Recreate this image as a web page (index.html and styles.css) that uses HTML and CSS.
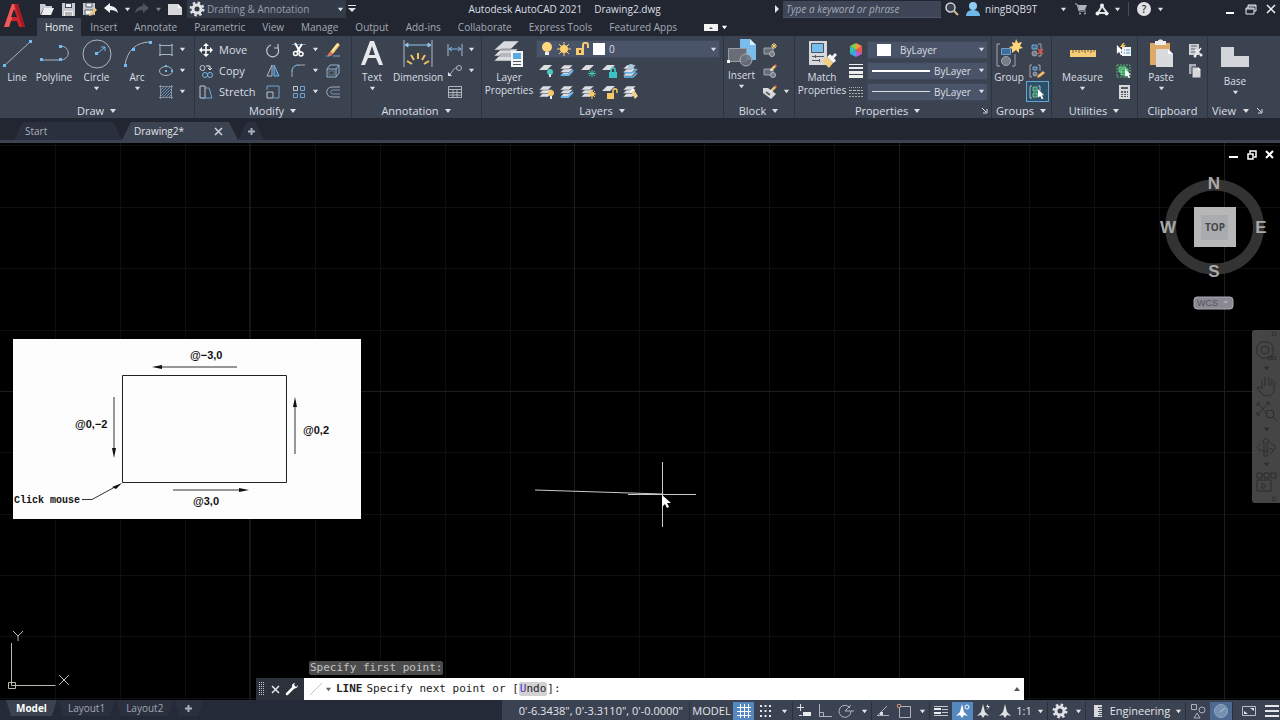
FILE: index.html
```html
<!DOCTYPE html>
<html lang="en">
<head>
<meta charset="utf-8">
<title>Autodesk AutoCAD 2021 - Drawing2.dwg</title>
<link rel="stylesheet" href="styles.css">
</head>
<body>
<svg class="sprite" aria-hidden="true">
  <symbol id="caret" viewBox="0 0 8 8"><path d="M1 2h6L4 6z" fill="currentColor"/></symbol>
  <symbol id="launch" viewBox="0 0 8 8"><path d="M1 1l4 4M6 2v4H2" stroke="currentColor" fill="none"/></symbol>
  <symbol id="layers" viewBox="0 0 16 16"><g fill="#dcdee2" stroke="#444c5a" stroke-width=".5"><path d="M0 13l4-4h9l-4 4z"/><path d="M0 9.500l4-4h9l-4 4z"/><path d="M0 6l4-4h9L9 6z"/></g></symbol>
  <symbol id="sheet" viewBox="0 0 16 16"><path d="M0 7l5-5h8L8 7z" fill="#dcdee2"/></symbol>
  <symbol id="cursor" viewBox="0 0 10 14"><path d="M1 0v11l3-2 2 4 2-1-2-4h3z" fill="#fff"/></symbol>
  <symbol id="pencil" viewBox="0 0 8 8"><path d="M0 8l1-3 3 2z" fill="#fff"/><path d="M1 5l4-4 2 2-4 4z" fill="#f3c56c"/><path d="M5 1l1-1 2 2-1 1z" fill="#e35b4f"/></symbol>
</svg>

<header class="top">
  <button class="logo" aria-label="Application menu"><svg width="26" height="28" viewBox="0 0 26 28"><path d="M3 25L11 2h6l7 23h-6l-2-6H9l-1 6z" fill="#c9262d"/><path d="M3 25L11 2h2l1 5-6 18z" fill="#ef5a56"/><path d="M10 15l3-8 3 8z" fill="#212631"/><path d="M17 2l7 23h-3L14 3z" fill="#a51b23"/></svg></button>
  <div class="top-rows">
    <div class="titlebar">
      <div class="quick">
        <button aria-label="Open"><svg width="16" height="14" viewBox="0 0 16 14"><path d="M1 13V2h5l1 2h6v2H5z" fill="#c9cbd0"/><path d="M5 6h10l-3 7H2z" fill="#eceef0"/></svg></button>
        <button aria-label="Save"><svg width="15" height="15" viewBox="0 0 15 15"><path d="M1 1h13v13H1z" fill="#c6cad0"/><path d="M4 1h7v5H4z" fill="#454b58"/><path d="M5 2h5v3H5zM3 9h9v5H3z" fill="#f2f2f2"/><path d="M4 11h7M4 13h7" stroke="#777"/></svg></button>
        <button aria-label="Save as"><svg width="16" height="15" viewBox="0 0 16 15"><path d="M1 1h12v12H1z" fill="#c6cad0"/><path d="M4 1h6v4H4zM3 8h8v5H3z" fill="#f2f2f2" stroke="#555b66"/><path d="M7 14l1-3 5-5 2 2-5 5z" fill="#f0c478"/></svg></button>
        <button aria-label="Undo"><svg width="16" height="12" viewBox="0 0 16 12"><path d="M1 5l6-5v3c4 0 7 2 8 7-2-2-4-3-8-3v3z" fill="#f0f1f3"/></svg></button>
        <button aria-label="Undo list"><svg class="caret"><use href="#caret"/></svg></button>
        <button aria-label="Redo"><svg width="16" height="12" viewBox="0 0 16 12"><path d="M15 5L9 0v3C5 3 2 5 1 10c2-2 4-3 8-3v3z" fill="#4d5360"/></svg></button>
        <button aria-label="Redo list" class="faint"><svg class="caret"><use href="#caret"/></svg></button>
        <button aria-label="New"><svg width="16" height="13" viewBox="0 0 16 13"><path d="M1 1h10l4 4v7H1z" fill="#d6d8dc"/><path d="M11 1v4h4z" fill="#fff"/></svg></button>
        <label class="workspace"><svg width="16" height="16" viewBox="0 0 16 16"><circle cx="8" cy="8" r="6" fill="none" stroke="#dfe1e5" stroke-width="3" stroke-dasharray="2.350 2.350"/><circle cx="8" cy="8" r="4" fill="none" stroke="#dfe1e5" stroke-width="3"/></svg><select aria-label="Workspace"><option>Drafting &amp; Annotation</option></select><svg class="caret"><use href="#caret"/></svg></label>
        <button aria-label="Customize"><svg width="8" height="10" viewBox="0 0 8 10"><path d="M0 1h8v1H0zM0 4h8L4 8z" fill="#dfe1e5"/></svg></button>
      </div>
      <div class="title"><span>Autodesk AutoCAD 2021</span><span>Drawing2.dwg</span></div>
      <div class="infobar">
        <button aria-label="Collapse search"><svg width="6" height="8" viewBox="0 0 6 8"><path d="M1 0l4 4-4 4z" fill="#e4e6ea"/></svg></button>
        <input type="text" class="search" aria-label="Search help" placeholder="Type a keyword or phrase">
        <button aria-label="Search"><svg width="14" height="14" viewBox="0 0 14 14"><circle cx="5.500" cy="5.500" r="4.500" fill="#3a4150" stroke="#cfd2d7" stroke-width="1.500"/><path d="M9 9l4 4" stroke="#d9b98c" stroke-width="2"/></svg></button>
        <svg width="16" height="14" viewBox="0 0 16 14"><circle cx="8" cy="4" r="4" fill="#8ecbf5"/><path d="M1 14c0-4 3-6 7-6s7 2 7 6z" fill="#6fb7ea"/></svg>
        <button class="user">ningBQB9T</button>
        <button aria-label="Account menu"><svg class="caret"><use href="#caret"/></svg></button>
        <button aria-label="App store"><svg width="13" height="12" viewBox="0 0 13 12"><path d="M0 1h2l2 7h7" fill="none" stroke="#aeb2ba"/><path d="M3 2h9l-2 5H4z" fill="#aeb2ba"/><circle cx="5" cy="10.500" r="1" fill="#aeb2ba"/><circle cx="10" cy="10.500" r="1" fill="#aeb2ba"/></svg></button>
        <button aria-label="Autodesk App"><svg width="14" height="13" viewBox="0 0 14 13"><path d="M7 3L3 10h9z" fill="none" stroke="#dfe1e5" stroke-width="2"/><g fill="#eceef0"><circle cx="7" cy="2.500" r="2"/><circle cx="2.500" cy="10.500" r="2"/><circle cx="11.500" cy="10.500" r="2"/></g></svg></button>
        <button aria-label="App menu"><svg class="caret"><use href="#caret"/></svg></button>
        <span class="rule"></span>
        <button aria-label="Help" class="help">?</button>
        <button aria-label="Help menu"><svg class="caret"><use href="#caret"/></svg></button>
        <span></span>
        <button aria-label="Minimize"><svg width="8" height="12" viewBox="0 0 8 12"><path d="M0 10h8" stroke="#fff" stroke-width="2"/></svg></button>
        <button aria-label="Restore"><svg width="12" height="11" viewBox="0 0 12 11"><path d="M3 4V1h8v6H9M1 4h8v6H1zM1 5h8M3 2h8" fill="none" stroke="#e6e8eb"/></svg></button>
        <button aria-label="Close"><svg width="10" height="10" viewBox="0 0 10 10"><path d="M1 1l8 8M9 1L1 9" stroke="#f1f1f1" stroke-width="1.500"/></svg></button>
      </div>
    </div>
    <nav class="menu">
      <button class="active">Home</button><button>Insert</button><button>Annotate</button><button>Parametric</button><button>View</button><button>Manage</button><button>Output</button><button>Add-ins</button><button>Collaborate</button><button>Express Tools</button><button>Featured Apps</button>
      <button class="toggle" aria-label="Ribbon display"><svg width="14" height="7" viewBox="0 0 14 7"><path d="M0 0h14v7H0z" fill="#f2f3f5"/><path d="M5 5l2-2 2 2z" fill="#444"/></svg><svg class="caret"><use href="#caret"/></svg></button>
    </nav>
  </div>
</header>

<main class="ribbon">
  <section class="panel">
    <div class="tools draw">
      <button class="big"><svg width="32" height="30" viewBox="0 0 32 30"><path d="M3 27L30 2" stroke="#aeb3bc"/><path d="M2 25h3v3H2zM28 1h3v3h-3z" fill="#6fbcf0"/></svg>Line</button>
      <button class="big"><svg width="32" height="30" viewBox="0 0 32 30"><path d="M4 21h18c11 0 11-14 0-14" fill="none" stroke="#aeb3bc"/><path d="M2 19h3v3H2zM21 19h3v3h-3zM21 6h3v3h-3z" fill="#6fbcf0"/></svg>Polyline</button>
      <button class="big"><svg width="32" height="30" viewBox="0 0 32 30"><circle cx="16" cy="15" r="14" fill="none" stroke="#aeb3bc"/><path d="M16 15l8-7m-4 0h4v4" fill="none" stroke="#6fbcf0"/><path d="M14 13h3v3h-3z" fill="#6fbcf0"/></svg>Circle<svg class="caret"><use href="#caret"/></svg></button>
      <button class="big"><svg width="32" height="30" viewBox="0 0 32 30"><path d="M4 26C6 12 15 3 29 3" fill="none" stroke="#aeb3bc"/><path d="M3 25h3v3H3zM11 9h3v3h-3zM28 2h3v3h-3z" fill="#6fbcf0"/></svg>Arc<svg class="caret"><use href="#caret"/></svg></button>
      <div class="small two">
        <button aria-label="Rectangle"><svg width="16" height="16" viewBox="0 0 16 16"><path d="M2 3.500h12v9H2z" fill="none" stroke="#aeb3bc"/><path d="M1 2h2v2H1zM13 2h2v2h-2zM1 12h2v2H1zM13 12h2v2h-2z" fill="#7d9fbd"/></svg></button><button aria-label="Rectangle options"><svg class="caret"><use href="#caret"/></svg></button>
        <button aria-label="Ellipse"><svg width="16" height="16" viewBox="0 0 16 16"><ellipse cx="8" cy="8" rx="6.500" ry="4.500" fill="none" stroke="#aeb3bc"/><path d="M7 7h2v2H7zM7 2h2v2H7zM13 7h2v2h-2z" fill="#6fbcf0"/></svg></button><button aria-label="Ellipse options"><svg class="caret"><use href="#caret"/></svg></button>
        <button aria-label="Hatch"><svg width="16" height="16" viewBox="0 0 16 16"><path d="M3 6l3-3M3 9l6-6M3 12l9-9M5 13l8-8M8 13l5-5M11 13l2-2" stroke="#6b94bd"/><path d="M2.500 1v14M13.500 1v14M1 2.500h14M1 13.500h14" stroke="#8b919c"/></svg></button><button aria-label="Hatch options"><svg class="caret"><use href="#caret"/></svg></button>
      </div>
    </div>
    <h2>Draw<svg class="caret"><use href="#caret"/></svg></h2>
  </section>

  <section class="panel">
    <div class="tools">
      <div class="small modify">
        <button class="named"><svg width="14" height="14" viewBox="0 0 14 14"><path d="M7 2v10M2 7h10" stroke="#fff" stroke-width="1.500"/><path d="M7 0l3 3H4zM7 14l3-3H4zM0 7l3-3v6zM14 7l-3-3v6z" fill="#fff"/></svg>Move</button>
        <button aria-label="Rotate"><svg width="16" height="16" viewBox="0 0 16 16"><path d="M6 3a6 6 0 1 0 7 3M13 2v4h-4" fill="none" stroke="#c3c7ce" stroke-width="1.200"/></svg></button>
        <button aria-label="Trim"><svg width="16" height="16" viewBox="0 0 16 16"><path d="M1 2.500h14" stroke="#6c8fb5"/><path d="M4 1l5 9M11 2L6 10" stroke="#fff" stroke-width="2"/><circle cx="4.500" cy="11.500" r="2" fill="none" stroke="#fff" stroke-width="1.500"/><circle cx="10" cy="12" r="2" fill="none" stroke="#fff" stroke-width="1.500"/></svg></button><button aria-label="Trim options"><svg class="caret"><use href="#caret"/></svg></button>
        <button aria-label="Erase"><svg width="16" height="16" viewBox="0 0 16 16"><path d="M5 10l7-9 3 2-7 9z" fill="#f4c866"/><path d="M7 8l6-7 1 1-6 7z" fill="#fff0b9"/><path d="M3 12l2-2 3 2-2 2H3z" fill="#e96c59"/><path d="M1 14h4M8 14h7" stroke="#6fa8d6"/></svg></button>

        <button class="named"><svg width="14" height="14" viewBox="0 0 14 14"><circle cx="3.500" cy="4" r="2.500" fill="none" stroke="#c3c7ce"/><path d="M7 2h4v4m-2-2l2 2 2-2" fill="none" stroke="#e5e7ea"/><g fill="none" stroke="#79b7e6"><circle cx="6" cy="11" r="2.500"/><circle cx="11" cy="11" r="2.500"/></g></svg>Copy</button>
        <button aria-label="Mirror"><svg width="16" height="16" viewBox="0 0 16 16"><path d="M7 2v11H2z" fill="none" stroke="#b5bac3"/><path d="M9 2v11h5z" fill="#3e6288" stroke="#6fbcf0"/></svg></button>
        <button aria-label="Fillet"><svg width="16" height="16" viewBox="0 0 16 16"><path d="M1 14V9c0-5 3-7 7-7h6" fill="none" stroke="#a3a8b1"/><path d="M1 9c0-5 3-7 7-7" fill="none" stroke="#6fa5d4"/></svg></button><button aria-label="Fillet options"><svg class="caret"><use href="#caret"/></svg></button>
        <button aria-label="Explode"><svg width="16" height="16" viewBox="0 0 16 16"><path d="M2 6h9v8H2zM2 6l3-4h9v8l-3 4M11 6l3-4" fill="none" stroke="#8fb3d1"/><path d="M4 8h5v4H4z" fill="none" stroke="#75797f"/></svg></button>

        <button class="named"><svg width="14" height="14" viewBox="0 0 14 14"><path d="M1 1h5v12H1z" fill="none" stroke="#c3c7ce"/><path d="M6 3h4l3 10H3" fill="none" stroke="#6fa5d4"/></svg>Stretch</button>
        <button aria-label="Scale"><svg width="16" height="16" viewBox="0 0 16 16"><path d="M2 6V2h12v12H9" fill="none" stroke="#6fa5d4"/><path d="M2 8h6v6H2z" fill="none" stroke="#c3c7ce"/></svg></button>
        <button aria-label="Array"><svg width="16" height="16" viewBox="0 0 16 16"><g fill="none" stroke="#6fa5d4"><path d="M9.500 2.500h4v4h-4zM2.500 9.500h4v4h-4zM9.500 9.500h4v4h-4z"/><path d="M2.500 2.500h4v4h-4z" stroke="#c3c7ce"/></g></svg></button><button aria-label="Array options"><svg class="caret"><use href="#caret"/></svg></button>
        <button aria-label="Offset"><svg width="16" height="16" viewBox="0 0 16 16"><path d="M15 3H7c-7 0-7 10 0 10h8" fill="none" stroke="#a8adb6"/><path d="M15 6H8c-3 0-3 4 0 4h7" fill="none" stroke="#7c93ad"/></svg></button>
      </div>
    </div>
    <h2>Modify<svg class="caret"><use href="#caret"/></svg></h2>
  </section>

  <section class="panel">
    <div class="tools annot">
      <button class="big"><svg width="26" height="30" viewBox="0 0 26 30"><path d="M2 26L11 2h4l9 24h-4l-3-7H9l-3 7zM10 16h6l-3-9z" fill="#e7e8eb"/></svg>Text<svg class="caret"><use href="#caret"/></svg></button>
      <button class="big"><svg width="32" height="30" viewBox="0 0 32 30"><path d="M2 1v27M30 1v27" stroke="#b4b8c0"/><path d="M3 6h26M3 6l3-2v4zM29 6l-3-2v4z" stroke="#8ec4ea" fill="#8ec4ea"/><path d="M16 14v6M9 16l3 5M23 16l-3 5M5 22l5 3M27 22l-5 3" stroke="#f3c35f" stroke-width="2"/></svg>Dimension</button>
      <div class="small two">
        <button aria-label="Linear"><svg width="16" height="16" viewBox="0 0 16 16"><path d="M1 2v12M15 2v12" stroke="#b4b8c0"/><path d="M2 7h12M5 5L2 7l3 2M11 5l3 2-3 2" stroke="#76b5e4" fill="none"/></svg></button><button aria-label="Linear options"><svg class="caret"><use href="#caret"/></svg></button>
        <button aria-label="Leader"><svg width="16" height="16" viewBox="0 0 16 16"><circle cx="12" cy="5" r="2.500" fill="none" stroke="#b4b8c0"/><path d="M9.500 5C6 5 6 9 3 11" fill="none" stroke="#b4b8c0"/><path d="M1 13V9l4 4z" fill="#dfe1e4"/></svg></button><button aria-label="Leader options"><svg class="caret"><use href="#caret"/></svg></button>
        <button aria-label="Table"><svg width="16" height="16" viewBox="0 0 16 16"><path d="M1.500 2.500h13v11h-13zM2 5.500h12M2 8.500h12M2 11h12M6 5v8M10 5v8" fill="none" stroke="#b0b4bc"/></svg></button><span></span>
      </div>
    </div>
    <h2>Annotation<svg class="caret"><use href="#caret"/></svg></h2>
  </section>

  <section class="panel">
    <div class="tools layer">
      <button class="big"><svg width="30" height="30" viewBox="0 0 30 30"><g fill="#d9dbdf" stroke="#4b525f" stroke-width=".5"><path d="M0 22l7-7h17l-7 7zM0 17l7-7h17l-7 7zM0 11l10-9h15l-9 9z"/></g><path d="M17 12h12v16H17z" fill="#f5f6f7"/><path d="M19 14h8v6h-8z" fill="#5aa9dd"/><path d="M19 22.500h8M19 25.500h8" stroke="#555"/></svg>Layer<br>Properties</button>
      <div class="layer-side">
        <label class="combo layer-combo">
          <svg width="12" height="14" viewBox="0 0 12 14"><circle cx="6" cy="5" r="5" fill="#ffd77f"/><path d="M4 10h4v3H4z" fill="#eee"/></svg>
          <svg width="14" height="14" viewBox="0 0 14 14"><circle cx="7" cy="7" r="4" fill="#fdd071"/><path d="M7 0v14M0 7h14M2 2l10 10M12 2L2 12" stroke="#fdd071"/></svg>
          <svg width="14" height="14" viewBox="0 0 14 14"><path d="M1 6h8v7H1z" fill="#f8cc74"/><path d="M8 6V3c0-3 5-3 5 0v3" fill="none" stroke="#f8cc74" stroke-width="2"/><path d="M4 8h2v3H4z" fill="#604b2a"/></svg>
          <svg width="12" height="12" viewBox="0 0 12 12"><path d="M0 0h12v12H0z" fill="#fff"/></svg>
          <select aria-label="Current layer"><option>0</option></select><svg class="caret"><use href="#caret"/></svg>
        </label>
        <div class="small five">
          <button aria-label="Layer off"><svg width="16" height="16"><use href="#sheet"/><circle cx="11" cy="9" r="3" fill="#4cc9c0"/><path d="M10 11h2v3h-2z" fill="#d9ecec"/></svg></button>
          <button aria-label="Isolate"><svg width="16" height="16"><use href="#layers"/><path d="M1 12h7l5-5" fill="none" stroke="#66b6ef" stroke-width="2"/></svg></button>
          <button aria-label="Freeze"><svg width="16" height="16"><use href="#sheet"/><path d="M11 7v7M7 10.500h8M8 8l6 5M14 8l-6 5" stroke="#3fc1ad"/></svg></button>
          <button aria-label="Lock layer"><svg width="16" height="16"><use href="#sheet"/><path d="M7 9h8v6H7z" fill="#3dc3c3"/><path d="M9 9V7c0-3 4-3 4 0v2" fill="none" stroke="#4ad0d0" stroke-width="1.500"/></svg></button>
          <button aria-label="Make current"><svg width="16" height="16"><use href="#layers"/><circle cx="8" cy="4" r="3" fill="#a7c8e1"/><path d="M1 10h9l4-4M1 14h9l4-4" fill="none" stroke="#66b6ef" stroke-width="1.500"/></svg></button>
          <button aria-label="Turn all on"><svg width="16" height="16"><use href="#layers"/><circle cx="12" cy="9" r="3" fill="#f5c867"/><path d="M11 12h2v3h-2z" fill="#eee"/></svg></button>
          <button aria-label="Unisolate"><svg width="16" height="16"><use href="#layers"/><path d="M1 13h7l5-5" fill="none" stroke="#66b6ef" stroke-width="2"/></svg></button>
          <button aria-label="Thaw"><svg width="16" height="16"><use href="#layers"/><circle cx="11" cy="10" r="2.500" fill="#f5c867"/><path d="M11 6v9M7 10h8M8 7l6 6M14 7l-6 6" stroke="#f5c867"/></svg></button>
          <button aria-label="Unlock"><svg width="16" height="16"><use href="#sheet"/><path d="M5 9h7v6H5z" fill="#f5c867"/><path d="M11 9V7c0-3 4-3 4 0v2" fill="none" stroke="#f5c867" stroke-width="1.500"/></svg></button>
          <button aria-label="Match layer"><svg width="16" height="16"><use href="#layers"/><path d="M8 8l3-2 4 6-3 3z" fill="#f3d28d"/><path d="M7 8l4-3" stroke="#fff" stroke-width="2"/></svg></button>
        </div>
      </div>
    </div>
    <h2>Layers<svg class="caret"><use href="#caret"/></svg></h2>
  </section>

  <section class="panel">
    <div class="tools block">
      <button class="big"><svg width="30" height="28" viewBox="0 0 30 28"><path d="M13 0h10l6 6v15H13z" fill="#78bdec"/><path d="M23 0v6h6z" fill="#d9effd"/><path d="M1.500 9.500h18v13h-18z" fill="#686d77" stroke="#979ba3"/><circle cx="19" cy="21" r="6" fill="#6c727d" fill-opacity=".8" stroke="#a9adb5"/><path d="M0 21h3v3H0z" fill="#fff"/></svg>Insert<svg class="caret"><use href="#caret"/></svg></button>
      <div class="small two">
        <button aria-label="Create block"><svg width="16" height="16" viewBox="0 0 16 16"><path d="M2 6h9v6H2z" fill="#686d77" stroke="#a4a8b0"/><circle cx="10" cy="12" r="2.500" fill="#747984" stroke="#b4b8c0"/><path d="M12 1v6M9 4h6M10 2l4 4M14 2l-4 4" stroke="#f7cf74"/></svg></button><span></span>
        <button aria-label="Edit block"><svg width="16" height="16" viewBox="0 0 16 16"><path d="M2 6h9v6H2z" fill="#686d77" stroke="#a4a8b0"/><circle cx="11" cy="12" r="2.500" fill="#747984" stroke="#b4b8c0"/><use href="#pencil" x="8" y="1" width="7" height="7"/></svg></button><span></span>
        <button aria-label="Attributes"><svg width="16" height="16" viewBox="0 0 16 16"><path d="M1 4h5l8 6-5 5-8-6z" fill="#d7d9dc"/><path d="M4 8l4 3" stroke="#666" stroke-width="2"/><use href="#pencil" x="8" y="1" width="7" height="7"/></svg></button><button aria-label="Attribute options"><svg class="caret"><use href="#caret"/></svg></button>
      </div>
    </div>
    <h2>Block<svg class="caret"><use href="#caret"/></svg></h2>
  </section>

  <section class="panel">
    <div class="tools props">
      <button class="big"><svg width="30" height="30" viewBox="0 0 30 30"><path d="M2 2h18v24H2z" fill="#d5d8dc"/><path d="M4.500 4.500h12v9h-12z" fill="#78bdec" stroke="#47535f"/><path d="M5 17.500h12M5 21.500h8M8.500 16v3M12.500 20v3" stroke="#555"/><path d="M15 22l5-4 6 6-4 5z" fill="#f3cf83"/><path d="M20 18l6 6 3-2-2-3 3-3-2-2-3 3-2-2z" fill="#f4f4f4"/></svg>Match<br>Properties</button>
      <div class="prop-grid">
        <svg width="14" height="14" viewBox="0 0 14 14"><path d="M7 7V0l6 3z" fill="#f29a38"/><path d="M7 7l6-4v8z" fill="#ee5a45"/><path d="M7 7l6 4-6 3z" fill="#b95bd5"/><path d="M7 7v7l-6-3z" fill="#3fa4e8"/><path d="M7 7l-6 4V3z" fill="#37c4b1"/><path d="M7 7L1 3l6-3z" fill="#89c94c"/></svg>
        <label class="combo color"><svg width="14" height="12" viewBox="0 0 14 12"><path d="M0 0h14v12H0z" fill="#fff"/></svg><select aria-label="Object color"><option>ByLayer</option></select><svg class="caret"><use href="#caret"/></svg></label>
        <svg width="14" height="14" viewBox="0 0 14 14"><path d="M0 .500h14" stroke="#eee"/><path d="M0 4h14" stroke="#eee" stroke-width="2"/><path d="M0 8.500h14M0 12.500h14" stroke="#eee" stroke-width="3"/></svg>
        <label class="combo"><span class="stroke thick"></span><select aria-label="Lineweight"><option>ByLayer</option></select><svg class="caret"><use href="#caret"/></svg></label>
        <svg width="14" height="14" viewBox="0 0 14 14"><path d="M0 2.500h14" stroke="#aaa" stroke-dasharray="1 1"/><path d="M0 5.500h14" stroke="#bbb" stroke-dasharray="3 1"/><path d="M0 8.500h14M0 11.500h14" stroke="#aaa" stroke-dasharray="2 1"/></svg>
        <label class="combo"><span class="stroke"></span><select aria-label="Linetype"><option>ByLayer</option></select><svg class="caret"><use href="#caret"/></svg></label>
      </div>
    </div>
    <h2 class="split"><span></span><span class="name">Properties<svg class="caret"><use href="#caret"/></svg></span><svg class="launch"><use href="#launch"/></svg></h2>
  </section>

  <section class="panel">
    <div class="tools groups">
      <button class="big"><svg width="28" height="30" viewBox="0 0 28 30"><path d="M5 5H2v22h3M17 27h3V15" fill="none" stroke="#a3a8b0"/><path d="M6.500 9.500h9v6h-9z" fill="#3e6c99" stroke="#6c9fc9"/><circle cx="11" cy="22" r="4.500" fill="#777c86" stroke="#a4a8b0"/><path d="M21 0l2 4 4-1-2 4 3 2-4 1v4l-3-3-4 3v-4l-3-2 4-1-1-4 3 1z" fill="#ffd57c"/></svg>Group</button>
      <div class="small one">
        <button aria-label="Ungroup"><svg width="16" height="16" viewBox="0 0 16 16"><path d="M9 2h3v12H9" fill="none" stroke="#a3a8b0"/><path d="M3 3h5v4H3z" fill="#3e6c99" stroke="#79a7cd"/><circle cx="5.500" cy="11.500" r="2.500" fill="#777c86" stroke="#a4a8b0"/><path d="M9 7l5 5M14 7l-5 5" stroke="#e5534b" stroke-width="1.500"/></svg></button>
        <button aria-label="Group edit"><svg width="16" height="16" viewBox="0 0 16 16"><path d="M3 2H1v12h2M9 2h2v6" fill="none" stroke="#a3a8b0"/><path d="M4 4h4v3H4z" fill="#3e6c99" stroke="#79a7cd"/><circle cx="6" cy="11" r="2" fill="#777c86" stroke="#a4a8b0"/><path d="M8 15l1-3 5-4 2 2-5 4z" fill="#f3b76b"/></svg></button>
        <button aria-label="Group selection" class="on"><svg width="16" height="16" viewBox="0 0 16 16"><path d="M3 2H1v12h2M9 2h2v5" fill="none" stroke="#b0b5bd"/><path d="M4 3h4v4H4zM4 9h4v4H4z" fill="#3e8066" stroke="#61c592"/><use href="#cursor" x="8" y="5" width="8" height="11"/></svg></button>
      </div>
    </div>
    <h2>Groups<svg class="caret"><use href="#caret"/></svg></h2>
  </section>

  <section class="panel">
    <div class="tools util">
      <button class="big"><svg width="28" height="30" viewBox="0 0 28 30"><path d="M1 11h26v7H1z" fill="#f6cd76"/><path d="M4 11v3M7 11v2M10 11v3M13 11v2M16 11v3M19 11v2M22 11v3M25 11v2" stroke="#775e32"/></svg>Measure<svg class="caret"><use href="#caret"/></svg></button>
      <div class="small one">
        <button aria-label="Quick select"><svg width="16" height="16" viewBox="0 0 16 16"><use href="#cursor" x="0" y="3" width="8" height="11"/><path d="M6 5h9v9H6z" fill="#f1f3f5"/><path d="M8 8h1M8 11h1M10 8h4M10 11h4" stroke="#4a90cf"/><path d="M7 1l-3 4h3L5 8l5-5H7l2-2z" fill="#f6c75e"/></svg></button>
        <button aria-label="Select all"><svg width="16" height="16" viewBox="0 0 16 16"><path d="M1 2h13v12H1z" fill="none" stroke="#54bb77" stroke-dasharray="2 1"/><path d="M3 4h7v5H3zM5 6h7v6H5z" fill="#3e9962" stroke="#72d890"/><use href="#cursor" x="8" y="6" width="8" height="10"/></svg></button>
        <button aria-label="Calculator"><svg width="16" height="16" viewBox="0 0 16 16"><path d="M3 1h11v14H3z" fill="#d6d8db"/><path d="M5 3h7v2H5zM5 7h2v2H5zM8 7h2v2H8zM11 7h1v2h-1zM5 10h2v1H5zM8 10h2v1H8zM11 10h1v1h-1zM5 12h2v1H5zM8 12h2v1H8zM11 12h1v1h-1z" fill="#555a63"/></svg></button>
      </div>
    </div>
    <h2>Utilities<svg class="caret"><use href="#caret"/></svg></h2>
  </section>

  <section class="panel">
    <div class="tools clip">
      <button class="big"><svg width="26" height="30" viewBox="0 0 26 30"><path d="M2 4h20v22H2z" fill="#dca968"/><path d="M7 2h3c0-2 5-2 5 0h3v4H7z" fill="#eceded"/><path d="M8 10h12l5 5v13H8z" fill="#d8dade"/><path d="M20 10v5h5z" fill="#fff"/></svg>Paste<svg class="caret"><use href="#caret"/></svg></button>
      <div class="small one">
        <button aria-label="Cut"><svg width="16" height="16" viewBox="0 0 16 16"><path d="M2 2h10v11H2z" fill="#d0d2d6"/><path d="M4 4h6M4 7h5M4 10h4" stroke="#5a606b"/><path d="M8 7l6 6M14 6l-6 8" stroke="#eee" stroke-width="1.500"/><circle cx="8" cy="14" r="1.500" fill="#eee"/><circle cx="14" cy="13" r="1.500" fill="#eee"/></svg></button>
        <button aria-label="Copy clip"><svg width="16" height="16" viewBox="0 0 16 16"><path d="M2 1h7v10H2z" fill="#a9adb5"/><path d="M5 4h6l3 3v8H5z" fill="#d6d8dc" stroke="#3b4351"/><path d="M11 4v3h3z" fill="#fff"/></svg></button>
      </div>
    </div>
    <h2>Clipboard</h2>
  </section>

  <section class="panel">
    <div class="tools view">
      <button class="big"><svg width="30" height="34" viewBox="0 0 30 34"><path d="M1 8h13v9h15v11H1z" fill="#d3d5da"/></svg>Base<svg class="caret"><use href="#caret"/></svg></button>
    </div>
    <h2 class="start">View<svg class="caret"><use href="#caret"/></svg><svg class="launch"><use href="#launch"/></svg></h2>
  </section>
</main>

<nav class="files">
  <button class="file start-tab">Start</button>
  <button class="file current">Drawing2*<svg width="9" height="9" viewBox="0 0 9 9"><path d="M1 1l7 7M8 1L1 8" stroke="#d0d3d9" stroke-width="1.500"/></svg></button>
  <button class="file add" aria-label="New tab"><svg width="9" height="9" viewBox="0 0 9 9"><path d="M4.500 1v7M1 4.500h7" stroke="#aab0bb" stroke-width="2"/></svg></button>
</nav>

<section class="canvas" aria-label="Drawing area">
  <svg class="model" width="100%" height="100%">
    <g class="minor"><path d="M55.500 0v900M120.500 0v900M185.500 0v900M315.500 0v900M380.500 0v900M445.500 0v900M510.500 0v900M639.500 0v900M704.500 0v900M769.500 0v900M834.500 0v900M964.500 0v900M1029.500 0v900M1094.500 0v900M1159.500 0v900M0 2.500h2400M0 64.500h2400M0 125.500h2400M0 187.500h2400M0 309.500h2400M0 371.500h2400M0 432.500h2400M0 493.500h2400M0 555.500h2400"/></g>
    <path class="major" d="M574.500 0v900M899.500 0v900M1224.500 0v900M0 248.500h2400"/>
    <path class="axis" d="M250 0v900"/>
    <g stroke="#c9c9c9" fill="none"><path d="M535 347l127 4"/><path d="M628 351.500h68M662.500 319v65"/></g>
    <path d="M662 352v12l3-3 2 4 2-1-2-4h4z" fill="#fff"/>
    <g stroke="#b9b9ad" fill="none"><path d="M11.500 500v42.500h44M8.500 539.500h7v6h-7zM13 488l5 5 5-5M18 493v5M59 532l10 10M69 532l-10 10"/></g>
  </svg>

  <figure class="sketch">
    <svg width="348" height="180" viewBox="0 0 348 180">
      <path d="M109.500 36.500h164v107h-164z" fill="none" stroke="#222"/>
      <g stroke="#333" fill="none"><path d="M224 28h-75M101 58v52M282 115V68M160 151h68M69 160.500h10l22-12"/></g>
      <g fill="#111"><path d="M139 28l10-2v4zM101 119l-2-10h4zM282 58l-2 10h4zM236 151l-10-2v4zM109 144l-6 6-4-2z"/>
      <text x="177" y="20">@−3,0</text><text x="62" y="89">@0,−2</text><text x="290" y="95">@0,2</text><text x="180" y="166">@3,0</text><text class="note" x="1" y="164">Click mouse</text></g>
    </svg>
  </figure>

  <div class="doc-controls">
    <button aria-label="Minimize drawing"><svg width="10" height="10" viewBox="0 0 10 10"><path d="M0 7h9" stroke="#fff" stroke-width="2"/></svg></button>
    <button aria-label="Restore drawing"><svg width="10" height="10" viewBox="0 0 10 10"><path d="M1 4h5v5H1zM3 3V1h6v6H7" fill="none" stroke="#fff" stroke-width="1.500"/></svg></button>
    <button aria-label="Close drawing"><svg width="10" height="10" viewBox="0 0 10 10"><path d="M1 1l7 7M8 1L1 8" stroke="#fff" stroke-width="2"/></svg></button>
  </div>

  <div class="cube">
    <svg width="112" height="138" viewBox="0 0 112 138">
      <ellipse cx="56.500" cy="54" rx="44" ry="42" fill="none" stroke="#333" stroke-width="11"/>
      <g class="compass"><text x="56" y="16">N</text><text x="56" y="104">S</text><text x="10" y="60">W</text><text x="103" y="60">E</text></g>
      <path d="M36 34h42v40H36z" fill="#b7b7b7"/><path d="M43 42h27v25H43z" fill="#a9abae"/>
      <text class="face" x="57" y="58">TOP</text>
      <rect x="36" y="124" width="39" height="12" rx="3" fill="#8b8a92" stroke="#aaa9b2"/>
      <text class="wcs" x="39" y="133">WCS</text><path d="M65 128h5l-2 3z" fill="#a9a8b3"/>
    </svg>
  </div>

  <aside class="navbar" aria-label="Navigation bar">
    <svg width="22" height="6" viewBox="0 0 22 6"><circle cx="19" cy="3" r="2"/></svg>
    <button aria-label="Steering wheel"><svg width="22" height="22" viewBox="0 0 22 22"><path d="M6 2h8l4 4v8l-4 4H6l-4-4V6z"/><circle cx="10" cy="10" r="4"/><circle cx="15" cy="18" r="2"/><circle cx="19" cy="18" r="2"/></svg></button>
    <svg class="caret"><use href="#caret"/></svg>
    <button aria-label="Pan"><svg width="22" height="22" viewBox="0 0 22 22"><path d="M2 13l5 6c3 3 10 3 12-3l1-10M7 14V6M10 11V2M14 11V2M17 11V4M2 13c1-2 3-1 5 1"/></svg></button>
    <button aria-label="Zoom"><svg width="22" height="22" viewBox="0 0 22 22"><path d="M2 3l11 11M14 2L2 15M2 6V3h3M11 2h3v3M2 12v3h3"/><circle cx="15" cy="14" r="4"/><path d="M18 17l4 4"/></svg></button>
    <svg class="caret"><use href="#caret"/></svg>
    <button aria-label="Orbit"><svg width="22" height="22" viewBox="0 0 22 22"><path d="M9 20V6H7l4-4 4 4h-3v14zM6 8c-6 2-4 6 3 7h5M16 8c6 1 5 5 2 6M14 12l5 2-4 4"/></svg></button>
    <svg class="caret"><use href="#caret"/></svg>
    <button aria-label="ShowMotion"><svg width="22" height="22" viewBox="0 0 22 22"><path d="M2 2h5v5H2zM9 2h5v5H9zM16 2h5v5h-5zM2 9h14v11H2zM7 12v6l4-3z"/></svg></button>
    <svg width="22" height="6" viewBox="0 0 22 6"><circle cx="19" cy="3" r="2"/></svg>
  </aside>

  <div class="command">
    <output class="history">Specify first point:</output>
    <div class="command-line">
      <div class="command-tools">
        <svg width="6" height="14" viewBox="0 0 6 14"><path d="M.500 0v14M2.500 0v14M4.500 0v14" stroke="#bfc3cb" stroke-dasharray="1 1"/></svg>
        <button aria-label="Close command line"><svg width="9" height="9" viewBox="0 0 9 9"><path d="M1 1l7 7M8 1L1 8" stroke="#e5e7ea" stroke-width="1.500"/></svg></button>
        <button aria-label="Customize command line"><svg width="14" height="14" viewBox="0 0 14 14"><path d="M2 12l7-7" stroke="#fff" stroke-width="2.500" stroke-linecap="round"/><path d="M10 1c-3 0-4 4-2 5s5 0 5-3l-2 2-2-2z" fill="#fff"/></svg></button>
      </div>
      <button class="recent" aria-label="Recent commands"><svg width="14" height="14" viewBox="0 0 14 14"><path d="M1 13L13 1" stroke="#bfc6d0"/></svg><svg class="caret"><use href="#caret"/></svg></button>
      <label class="prompt" for="cmd"><b>LINE</b><span>Specify next point or [<button class="option"><i>U</i>ndo</button>]:</span></label>
      <input id="cmd" type="text">
      <button class="expand" aria-label="Expand history"><svg width="8" height="6" viewBox="0 0 8 6"><path d="M1 5l3-4 3 4z" fill="#555"/></svg></button>
    </div>
  </div>
</section>

<footer class="status">
  <nav class="layouts"><button class="current">Model</button><button>Layout1</button><button>Layout2</button><button aria-label="New layout"><svg width="9" height="9" viewBox="0 0 9 9"><path d="M4.500 1v7M1 4.500h7" stroke="#aab0bb" stroke-width="2"/></svg></button></nav>
  <div class="status-tools">
    <button class="coords">0'-6.3438", 0'-3.3110", 0'-0.0000"</button>
    <button class="edge">MODEL</button>
    <button class="lit" aria-label="Grid"><svg width="16" height="16" viewBox="0 0 16 16"><path d="M4.500 1v14M8.500 1v14M12.500 1v14M1 4.500h14M1 8.500h14M1 12.500h14" stroke="#fff"/></svg></button>
    <button aria-label="Snap"><svg width="14" height="14" viewBox="0 0 14 14"><path d="M2 2h11M2 7h11M2 12h11" stroke="#e5e7ea" stroke-width="2" stroke-dasharray="2 2.500"/></svg></button>
    <button aria-label="Snap options"><svg class="caret"><use href="#caret"/></svg></button>
    <button class="edge" aria-label="Dynamic input"><svg width="16" height="14" viewBox="0 0 16 14"><path d="M4.500 0v7M1 3.500h7" stroke="#dfe1e5"/><path d="M7 8h8v4H7z" fill="#e9eaec"/><path d="M3 11.500h3" stroke="#dfe1e5"/></svg></button>
    <button aria-label="Ortho"><svg width="14" height="14" viewBox="0 0 14 14"><path d="M1.500 0v12.500H14M1.500 8.500h4v4" fill="none" stroke="#aeb3bc"/></svg></button>
    <button aria-label="Polar"><svg width="16" height="16" viewBox="0 0 16 16"><path d="M12 5a6 6 0 1 0 1 3M7 8h9M7 8l6-6" fill="none" stroke="#aeb3bc"/></svg></button>
    <button aria-label="Polar options"><svg class="caret"><use href="#caret"/></svg></button>
    <button class="edge" aria-label="Object tracking"><svg width="14" height="14" viewBox="0 0 14 14"><path d="M1 11.500h12M2 11L11 2" stroke="#aeb3bc"/><path d="M4 8h3v3H4z" fill="#dadde1"/></svg></button>
    <button aria-label="Object snap"><svg width="14" height="14" viewBox="0 0 14 14"><path d="M2.500 2.500h11v11h-11z" fill="none" stroke="#aeb3bc"/><path d="M.500.500h3v3h-3z" fill="#3b4252" stroke="#c69077"/></svg></button>
    <button aria-label="Object snap options"><svg class="caret"><use href="#caret"/></svg></button>
    <button class="edge" aria-label="Lineweight display"><svg width="14" height="12" viewBox="0 0 14 12"><path d="M0 1.500h14M8 4.500h6M8 7.500h6M0 10.500h14" stroke="#c7cad0"/><path d="M0 4h7M0 8h7" stroke="#eceef0" stroke-width="2"/></svg></button>
    <button class="lit" aria-label="Annotation visibility"><svg width="16" height="16" viewBox="0 0 16 16"><path d="M7 1l2 8 4 4-4-1-2 3-2-3-4 1 4-4z" fill="#fff"/><circle cx="12" cy="4" r="2" fill="none" stroke="#fff"/></svg></button>
    <button aria-label="Auto scale"><svg width="16" height="16" viewBox="0 0 16 16"><path d="M7 1l2 8 4 4-4-1-2 3-2-3-4 1 4-4z" fill="#dfe1e5"/><path d="M12 1l-2 3h2l-1 3 3-4h-2z" fill="#dfe1e5"/></svg></button>
    <button aria-label="Annotation scale"><svg width="14" height="16" viewBox="0 0 14 16"><path d="M7 1l2 8 4 4-4-1-2 3-2-3-4 1 4-4z" fill="#dfe1e5"/></svg></button>
    <button>1:1</button>
    <button aria-label="Scale list"><svg class="caret"><use href="#caret"/></svg></button>
    <button class="edge" aria-label="Workspace switching"><svg width="16" height="16" viewBox="0 0 16 16"><circle cx="8" cy="8" r="6" fill="none" stroke="#dfe1e5" stroke-width="3" stroke-dasharray="2.350 2.350"/><circle cx="8" cy="8" r="4" fill="none" stroke="#dfe1e5" stroke-width="3"/></svg></button>
    <button aria-label="Workspace list"><svg class="caret"><use href="#caret"/></svg></button>
    <button class="edge" aria-label="Units icon"><svg width="8" height="14" viewBox="0 0 8 14"><path d="M0 1h8v12H0z" fill="#d8dade"/><path d="M4 3.500h4M5 5.500h3M4 7.500h4M5 9.500h3M4 11.500h4" stroke="#4a505c"/></svg></button>
    <button>Engineering</button>
    <button aria-label="Units list"><svg class="caret"><use href="#caret"/></svg></button>
    <button class="edge" aria-label="Isolate objects"><svg width="16" height="16" viewBox="0 0 16 16"><g fill="none" stroke="#aeb3bc"><path d="M1.500 1.500h5v5h-5zM7 10l3 5H4z"/><circle cx="12" cy="7" r="3"/></g></svg></button>
    <button class="lit dim" aria-label="Hardware acceleration"><svg width="16" height="16" viewBox="0 0 16 16"><circle cx="8" cy="8" r="6.500" fill="#7690b2" stroke="#92a6c0"/><path d="M7 9l5-4" stroke="#b8c5d6"/></svg></button>
    <button class="edge" aria-label="Clean screen"><svg width="16" height="12" viewBox="0 0 16 12"><path d="M1.500 1.500h13v9h-13z" fill="none" stroke="#b9bdc5"/><path d="M9 3h4v3zM3 9h4L3 6z" fill="#dfe1e5"/></svg></button>
    <button aria-label="Customization"><svg width="14" height="12" viewBox="0 0 14 12"><path d="M0 1h14M0 6h14M0 11h14" stroke="#e5e7ea" stroke-width="2"/></svg></button>
  </div>
</footer>
</body>
</html>
```
FILE: styles.css
```css
* { box-sizing: border-box; }
body {
  margin: 0;
  min-height: 100vh;
  display: flex;
  flex-direction: column;
  background: #000;
  color: #dcdfe4;
  font: 10px/14px "Open Sans", "Noto Sans", sans-serif;
  overflow: hidden;
}
button, select, input { font: inherit; color: inherit; background: none; border: 0; padding: 0; margin: 0; white-space: nowrap; }
button { display: inline-flex; align-items: center; justify-content: center; }
select { appearance: none; outline: 0; }
svg { display: block; flex: none; }
.sprite { position: absolute; width: 0; height: 0; }
.caret { width: 7px; height: 7px; }

/* title bar and menu */
.top { display: flex; background: #212631; }
.logo { width: 36px; align-items: flex-start; padding-top: 2px; }
.logo svg { margin-right: 8px; }
.top-rows { flex: 1; }
.titlebar { display: flex; height: 18px; }
.quick { display: grid; grid-template-columns: 21px 22px 21px 22px 10px 20px 12px 22px 160px 12px; align-items: center; }
.faint { color: #777d89; }
.workspace { display: flex; align-items: center; gap: 2px; height: 18px; margin-left: 1px; padding: 0 2px; background: #333a48; color: #999fa9; }
.workspace select { flex: 1; min-width: 0; }
.workspace .caret { color: #dfe1e5; }
.title { flex: 1; display: flex; justify-content: center; align-items: center; gap: 12px; }
.infobar { display: grid; grid-template-columns: 12px 158px 22px 20px 72px 16px 20px 21px 10px 12px 20px 12px 53px 21px 22px 18px; align-items: center; justify-items: center; }
.search { width: 100%; height: 17px; padding: 0 3px; background: #3d4556; border-bottom: 1px solid #4c5566; font-style: italic; }
.search::placeholder { color: #a4abb8; opacity: 1; }
.user { justify-self: start; padding-left: 2px; }
.rule { width: 1px; height: 14px; background: #474d5a; }
.help { width: 14px; height: 14px; border-radius: 50%; background: #dfe1e4; color: #333; font-weight: 600; }
.menu { display: flex; gap: 1px; height: 18px; color: #a6abb5; }
.menu button { padding: 0 8px; }
.menu .active { background: #3b4351; color: #eceef1; margin-left: 1px; }
.menu .toggle { gap: 3px; padding: 0 18px; color: #fff; }

/* ribbon */
.ribbon { display: grid; grid-template-columns: 194fr 157fr 130fr 242fr 71fr 197fr 60fr 86fr 70fr 73fr; background: #3b4351; height: 82px; }
.panel { display: flex; flex-direction: column; min-width: 0; border-left: 1px solid #2d3441; }
.panel:first-child { border-left: 0; }
.tools { display: grid; flex: 1; justify-content: start; padding-top: 3px; }
.panel h2 { display: flex; align-items: center; justify-content: center; gap: 5px; height: 15px; margin: 0; font: inherit; font-size: 11px; }
.panel h2 .caret { width: 8px; height: 8px; }
.panel .start { justify-content: flex-start; gap: 6px; padding-left: 4px; }
.panel .split { justify-content: space-between; }
.name { display: flex; align-items: center; gap: 5px; }
.panel .launch { width: 8px; height: 8px; margin-right: 2px; }
.draw { grid-template-columns: 34px 40px 45px 36px 38px; }
.annot { grid-template-columns: 40px 52px 36px; }
.layer { grid-template-columns: 54px 1fr; justify-content: stretch; }
.block { grid-template-columns: 35px 34px; }
.props { grid-template-columns: 54px 1fr; justify-content: stretch; }
.groups { grid-template-columns: 34px 22px; }
.util { grid-template-columns: 61px 20px; }
.clip { grid-template-columns: 46px 20px; }
.view { grid-template-columns: 54px; }
.big { flex-direction: column; justify-content: flex-start; align-self: start; line-height: 13px; text-align: center; }
.big > svg:first-child { margin-bottom: 2px; }
.big .caret { margin-top: 1px; }
.small { display: grid; grid-auto-rows: 21px; align-content: start; align-items: center; justify-items: center; }
.two { grid-template-columns: 22px 10px; }
.modify { grid-template-columns: 60px 28px 24px 8px 28px; padding-left: 4px; }
.five { grid-template-columns: repeat(5, 21px); }
.one { grid-template-columns: 22px; }
.named { gap: 6px; justify-self: start; font-size: 11px; }
.on { width: 21px; height: 19px; background: #2d5069; outline: 1px solid #5fa8dc; }
.layer-side { padding-right: 3px; }
.layer-combo { margin: 1px 0 2px; }
.combo { display: flex; align-items: center; gap: 4px; height: 18px; padding: 0 2px 0 4px; background: #4a5468; border: 1px solid #3f485a; }
.combo select { flex: 1; min-width: 0; }
.color { gap: 9px; padding-left: 9px; }
.stroke { flex: none; width: 58px; height: 1px; background: #d9dbdf; }
.thick { height: 2px; background: #fff; }
.prop-grid { display: grid; grid-template-columns: 18px 1fr; grid-auto-rows: 21px; align-content: start; align-items: center; padding-right: 3px; }

/* file tabs */
.files { display: flex; align-items: flex-end; height: 25px; padding-left: 14px; background: #212631; border-bottom: 3px solid #3b4351; }
.file { height: 18px; background: #2a303d; color: #a9aeb8; clip-path: polygon(9px 0, calc(100% - 9px) 0, 100% 100%, 0 100%); }
.start-tab { width: 108px; justify-content: flex-start; padding-left: 11px; }
.file.current { width: 116px; justify-content: space-between; padding: 0 15px 0 12px; background: #3b4351; color: #e1e3e8; }
.add { width: 26px; }

/* drawing area */
.canvas { position: relative; flex: 1; min-height: 540px; background: #000; overflow: hidden; }
.model { position: absolute; inset: 0; }
.minor { stroke: #0e0f10; }
.major { stroke: #1c1d1f; }
.axis { stroke: #222c24; }
.sketch { position: absolute; left: 13px; top: 196px; margin: 0; background: #fdfdfd; font: bold 11px "Liberation Sans", sans-serif; }
.sketch .note { font: bold 10px "Liberation Mono", monospace; }
.doc-controls { position: absolute; right: 5px; top: 7px; display: flex; gap: 8px; }
.cube { position: absolute; right: 10px; top: 30px; }
.compass { font: bold 17px "Liberation Sans", sans-serif; fill: #a9a9a9; text-anchor: middle; }
.face { font: bold 10px "Open Sans", sans-serif; fill: #444; text-anchor: middle; }
.wcs { font: 9px "Liberation Sans", sans-serif; fill: #54535e; }
.navbar { position: absolute; right: 0; top: 187px; width: 28px; height: 173px; padding: 1px 0; display: flex; flex-direction: column; justify-content: space-between; align-items: center; background: #454545; border-radius: 3px 0 0 3px; color: #2b2b2b; }
.navbar svg { fill: none; stroke: #2d2d2d; stroke-width: 1px; }
.navbar .caret { stroke: none; }
.command { position: absolute; left: 20%; right: 20%; bottom: 0; font: 11px/14px "DejaVu Sans Mono", monospace; }
.history { display: inline-block; margin-left: 53px; padding: 0 1px; background: #4b4b4b; color: #c3c3c3; border-radius: 2px; }
.command-line { display: flex; align-items: center; height: 22px; margin-top: 3px; background: #fff; color: #222; }
.command-tools { display: flex; align-items: center; justify-content: space-between; align-self: stretch; width: 48px; padding: 0 5px 0 3px; background: #2c313c; }
.recent { gap: 2px; width: 32px; color: #666; }
.prompt { display: flex; gap: 4px; }
.option { padding: 0 1px; background: #d2d2d2; border-radius: 2px; }
.option i { font-style: normal; color: #4a34c8; }
.command input { flex: 1; min-width: 0; outline: 0; }
.expand { width: 14px; }

/* status bar */
.status { display: flex; height: 20px; background: #252a38; }
.layouts { flex: 1; display: flex; align-items: flex-start; gap: 1px; padding-left: 6px; color: #a1a6b1; }
.layouts button { height: 16px; padding: 0 10px; background: #2a303e; clip-path: polygon(0 0, 100% 0, calc(100% - 5px) 100%, 5px 100%); }
.layouts .current { background: #3b4351; color: #fff; font-weight: 700; }
.status-tools { display: grid; grid-template-columns: 187px 44px 21px 22px 16px 22px 21px 22px 14px 22px 22px 14px 23px 21px 22px 20px 18px 14px 24px 14px 24px 62px 14px 25px 22px 32px 16px; background: #3b4252; color: #e3e5e9; padding-top: 2px; font-size: 11px; }
.coords { justify-content: flex-end; padding-right: 6px; }
.status-tools .edge { border-left: 1px solid #2a303c; }
.status-tools .lit { background: #5688c0; }
.status-tools .dim { background: #4d6a92; }
```
